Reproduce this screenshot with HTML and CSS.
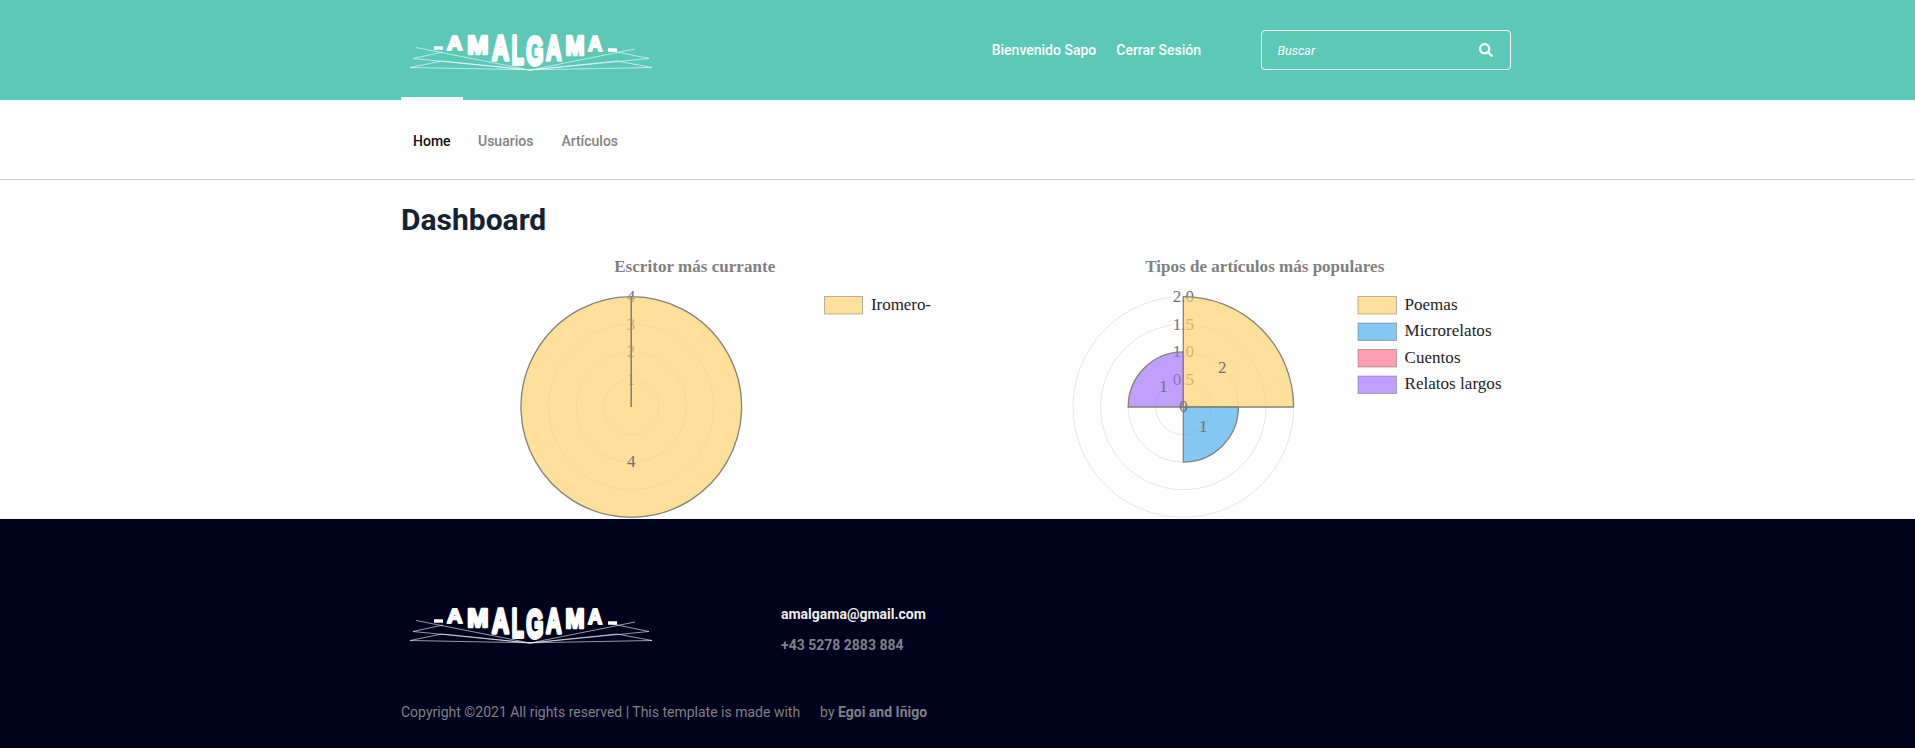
FILE: index.html
```html
<!DOCTYPE html>
<html lang="es">
<head>
<meta charset="utf-8">
<title>Dashboard</title>
<link rel="stylesheet" href="styles.css">
</head>
<body>
<header class="header">
  <div class="container header-row">
    <svg class="logo" viewBox="0 0 260 50">
      <path class="logo-lines" d="M15 17.500L129 40L234 19M42 22L12 28.500L129 40L248 28.500L209 20.500M41 31L9 37.500L129 39.800L251 37.500L216 31M41 31L129 40L216 31"/>
      <path class="logo-dash" d="M33 18h9M207 20h9"/>
      <g class="logo-text">
        <text transform="translate(46 20) scale(1.07 1)">A</text>
        <text transform="translate(66.200 24) scale(1.27 1.3)">M</text>
        <text transform="translate(91 30) scale(1.18 1.73)">A</text>
        <text transform="translate(110.800 34) scale(.98 2)">L</text>
        <text transform="translate(125.300 34.500) scale(1.1 2)">G</text>
        <text transform="translate(145 30) scale(1.07 1.73)">A</text>
        <text transform="translate(164.500 25) scale(1.14 1.36)">M</text>
        <text transform="translate(187 21) scale(.98 1.09)">A</text>
      </g>
    </svg>
    <div class="header-tools">
      <a class="session">Bienvenido Sapo</a>
      <a class="session">Cerrar Sesión</a>
      <div class="search">
        <span>Buscar</span>
        <svg class="search-icon" viewBox="0 0 512 512"><path d="M505 442.700L405.300 343c-4.500-4.500-10.600-7-17-7H372c27.600-35.300 44-79.700 44-128C416 93.100 322.900 0 208 0S0 93.100 0 208s93.100 208 208 208c48.300 0 92.700-16.400 128-44v16.300c0 6.400 2.500 12.500 7 17l99.700 99.700c9.400 9.400 24.600 9.400 33.900 0l28.300-28.300c9.400-9.400 9.400-24.600.1-34zM208 336c-70.700 0-128-57.200-128-128 0-70.700 57.200-128 128-128 70.700 0 128 57.200 128 128 0 70.700-57.200 128-128 128z"/></svg>
      </div>
    </div>
  </div>
</header>

<nav class="nav">
  <div class="container nav-row">
    <a class="nav-link active">Home</a>
    <a class="nav-link">Usuarios</a>
    <a class="nav-link">Artículos</a>
  </div>
</nav>

<main class="container main">
  <h1>Dashboard</h1>
  <div class="charts">
    <svg class="chart" viewBox="0 0 570 279">
      <text class="chart-title" x="284.700" y="32" textLength="161">Escritor más currante</text>
      <g class="grid">
        <circle cx="221.300" cy="167" r="27.600"/><circle cx="221.300" cy="167" r="55.100"/><circle cx="221.300" cy="167" r="82.700"/><circle cx="221.300" cy="167" r="110.300"/>
      </g>
      <g class="plate"><rect x="215" y="47" width="13" height="20"/><rect x="215" y="74.600" width="13" height="20"/><rect x="215" y="102.100" width="13" height="20"/><rect x="215" y="129.700" width="13" height="20"/></g>
      <g class="tick"><text x="221" y="62">4</text><text x="221" y="89.500">3</text><text x="221" y="117">2</text><text x="221" y="144.500">1</text></g>
      <path class="slice yellow" d="M221.300 167V56.700A110.300 110.300 0 1 1 221.290 56.700Z"/>
      <path class="slice" d="M221.300 167V56.700"/>
      <text class="value" x="221.300" y="227">4</text>
      <rect class="key yellow" x="414.500" y="56.500" width="38" height="17.500"/>
      <text class="legend" x="461" y="69.500" textLength="60">Iromero-</text>
    </svg>
    <svg class="chart" viewBox="0 0 570 279">
      <text class="chart-title" x="284.800" y="32" textLength="239">Tipos de artículos más populares</text>
      <g class="grid">
        <circle cx="203.300" cy="167" r="27.600"/><circle cx="203.300" cy="167" r="55.100"/><circle cx="203.300" cy="167" r="82.700"/><circle cx="203.300" cy="167" r="110.300"/>
      </g>
      <g class="plate"><rect x="191" y="47" width="25" height="20"/><rect x="191" y="74.600" width="25" height="20"/><rect x="191" y="102.100" width="25" height="20"/><rect x="191" y="129.700" width="25" height="20"/></g>
      <g class="tick"><text x="203.300" y="62">2.0</text><text x="203.300" y="89.500">1.5</text><text x="203.300" y="117">1.0</text><text x="203.300" y="144.500">0.5</text></g>
      <path class="slice yellow" d="M203.300 167V56.700A110.300 110.300 0 0 1 313.600 167Z"/>
      <path class="slice blue" d="M203.300 167H258.400A55.100 55.100 0 0 1 203.300 222.100Z"/>
      <path class="slice purple" d="M203.300 167H148.200A55.100 55.100 0 0 1 203.300 111.900Z"/>
      <text class="value" x="242.300" y="133">2</text>
      <text class="value" x="223.300" y="192">1</text>
      <text class="value" x="183.500" y="152">1</text>
      <text class="value" x="203.500" y="172">0</text>
      <rect class="key yellow" x="378" y="56.500" width="38.500" height="17.500"/>
      <rect class="key blue" x="378" y="83" width="38.500" height="17.500"/>
      <rect class="key pink" x="378" y="109.500" width="38.500" height="17.500"/>
      <rect class="key purple" x="378" y="136" width="38.500" height="17.500"/>
      <text class="legend" x="424.500" y="69.500" textLength="53">Poemas</text>
      <text class="legend" x="424.500" y="96" textLength="87">Microrelatos</text>
      <text class="legend" x="424.500" y="122.500" textLength="56">Cuentos</text>
      <text class="legend" x="424.500" y="149" textLength="97">Relatos largos</text>
    </svg>
  </div>
</main>

<footer class="footer">
  <div class="container">
    <div class="footer-row">
      <svg class="logo" viewBox="0 0 260 50">
        <path class="logo-lines" d="M15 17.500L129 40L234 19M42 22L12 28.500L129 40L248 28.500L209 20.500M41 31L9 37.500L129 39.800L251 37.500L216 31M41 31L129 40L216 31"/>
        <path class="logo-dash" d="M33 18h9M207 20h9"/>
        <g class="logo-text">
          <text transform="translate(46 20) scale(1.07 1)">A</text>
          <text transform="translate(66.200 24) scale(1.27 1.3)">M</text>
          <text transform="translate(91 30) scale(1.18 1.73)">A</text>
          <text transform="translate(110.800 34) scale(.98 2)">L</text>
          <text transform="translate(125.300 34.500) scale(1.1 2)">G</text>
          <text transform="translate(145 30) scale(1.07 1.73)">A</text>
          <text transform="translate(164.500 25) scale(1.14 1.36)">M</text>
          <text transform="translate(187 21) scale(.98 1.09)">A</text>
        </g>
      </svg>
      <div class="contact">
        <a class="mail">amalgama@gmail.com</a>
        <a class="phone">+43 5278 2883 884</a>
      </div>
    </div>
    <p class="copyright"><span>Copyright ©2021 All rights reserved | This template is made with</span><span>by <b>Egoi and Iñigo</b></span></p>
  </div>
</footer>
</body>
</html>
```
FILE: styles.css
```css
* { box-sizing: border-box; }
body { margin: 0; background: #fff; font-family: Roboto, sans-serif; font-size: 14px; overflow: hidden; }
.container { width: 1110px; margin-left: 401px; }

.header { height: 100px; background: #5cc8b8; color: #fff; }
.header-row { display: flex; justify-content: space-between; padding-top: 30px; }
.logo { display: block; width: 260px; height: 50px; overflow: visible; }
.logo-lines { fill: none; stroke: #fff; stroke-width: .9; opacity: .65; }
.logo-dash { stroke: #fff; stroke-width: 3.500; }
.logo-text { font: 700 20px "Liberation Sans", sans-serif; fill: #fff; stroke: #fff; stroke-width: 2; stroke-linejoin: round; }
.header-tools { display: flex; align-items: center; height: 40px; }
.session { font-weight: 500; margin-right: 20px; white-space: nowrap; }
.session + .session { margin-right: 60px; }
.search { display: flex; align-items: center; justify-content: space-between; width: 250px; height: 40px; padding: 0 17px 0 15.500px; border: 1px solid #fff; border-radius: 4px; font-size: 12.500px; font-style: italic; }
.search-icon { width: 14px; height: 14px; fill: #fff; }

.nav { height: 80px; border-bottom: 1px solid #ccc; }
.nav-row { display: flex; }
.nav-link { height: 79px; padding: 33px 14px 0; color: #828282; font-weight: 500; line-height: 17px; }
.nav-link.active { width: 62px; height: 82px; margin: -3px 1px 0 0; padding: 33px 0 0 12px; border-top: 3px solid #f8f8f8; color: #111; }

.main { height: 339px; padding-top: 21px; }
h1 { margin: 0 0 1px; color: #142334; font-size: 30px; font-weight: 700; line-height: 38px; }
.charts { display: flex; width: 1140px; margin-left: 9px; }
.chart { display: block; flex: none; width: 570px; height: 279px; font: 17px "Liberation Serif", serif; }
.chart-title { font-weight: 700; text-anchor: middle; fill: #808080; }
.grid { fill: none; stroke: #e6e6e6; }
.plate { fill: #fff; fill-opacity: .75; }
.tick, .value { text-anchor: middle; fill: #707070; }
.slice { stroke: #85827c; stroke-width: 1.300; }
.key { stroke: rgba(80, 80, 80, .4); }
.yellow { fill: rgba(253, 209, 105, .67); }
.blue { fill: rgba(68, 169, 236, .65); }
.pink { fill: rgba(255, 105, 137, .65); }
.purple { fill: rgba(160, 108, 255, .65); }
.legend { fill: #222; }

.footer { height: 229px; padding-top: 84px; background: #00011c; color: #808089; }
.footer-row { display: flex; }
.contact { display: flex; flex-direction: column; gap: 14px; margin-left: 120px; padding-top: 3px; font-weight: 700; line-height: 17px; }
.mail { color: #eee; }
.copyright { display: flex; gap: 20px; margin: 50px 0 0; line-height: 17px; }
```
